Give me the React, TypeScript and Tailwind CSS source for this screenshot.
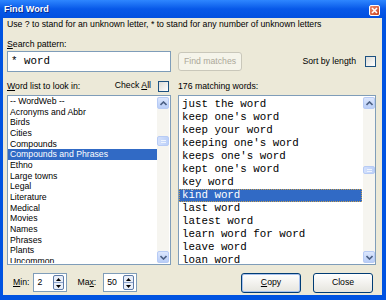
import React from "react"

const listNames = [
  "-- WordWeb --",
  "Acronyms and Abbr",
  "Birds",
  "Cities",
  "Compounds",
  "Compounds and Phrases",
  "Ethno",
  "Large towns",
  "Legal",
  "Literature",
  "Medical",
  "Movies",
  "Names",
  "Phrases",
  "Plants",
  "Uncommon",
]

const matches = [
  "just the word",
  "keep one's word",
  "keep your word",
  "keeping one's word",
  "keeps one's word",
  "kept one's word",
  "key word",
  "kind word",
  "last word",
  "latest word",
  "learn word for word",
  "leave word",
  "loan word",
]

function Chevron({ down }: { down?: boolean }) {
  return (
    <svg width="7" height="5" viewBox="0 0 7 5">
      <polyline
        points={down ? "0.5,1 3.5,4 6.5,1" : "0.5,4 3.5,1 6.5,4"}
        fill="none"
        stroke="#4D6185"
        strokeWidth="1.6"
      />
    </svg>
  )
}

function ArrowBtn({ down }: { down?: boolean }) {
  return (
    <div className="h-[12px] w-full flex items-center justify-center rounded-[2px] border border-[#B7CBF5] bg-gradient-to-b from-[#DCE7FD] to-[#B9CEF7]">
      <Chevron down={down} />
    </div>
  )
}

function Scrollbar({ thumbTop, thumbH }: { thumbTop: string; thumbH: string }) {
  return (
    <div className="w-[12px] flex flex-col bg-[#F6F5F0]">
      <ArrowBtn />
      <div className="flex-1 flex flex-col">
        <div className={`${thumbTop} ${thumbH} rounded-[2px] border border-[#B7CBF5] bg-gradient-to-r from-[#D3E0FC] to-[#BCD0F8] flex flex-col items-center justify-center gap-[1px]`}>
          <div className="w-[5px] h-px bg-[#EEF4FE]" />
          <div className="w-[5px] h-px bg-[#EEF4FE]" />
        </div>
      </div>
      <ArrowBtn down />
    </div>
  )
}

function Checkbox() {
  return <div className="w-[11px] h-[11px] border border-[#1C5180] bg-gradient-to-br from-[#DCDCD7] to-white" />
}

function Spin() {
  return (
    <div className="w-[11px] h-[15px] flex flex-col border border-[#5E7BA8] rounded-[2px] bg-[#E9EEF8]">
      <div className="flex-1 flex items-center justify-center border-b border-[#8CA3CA]">
        <svg width="5" height="3" viewBox="0 0 5 3"><polygon points="0,3 2.5,0 5,3" fill="#000" /></svg>
      </div>
      <div className="flex-1 flex items-center justify-center">
        <svg width="5" height="3" viewBox="0 0 5 3"><polygon points="0,0 2.5,3 5,0" fill="#000" /></svg>
      </div>
    </div>
  )
}

function NumBox({ value }: { value: string }) {
  return (
    <div className="w-[34px] h-[19px] border border-[#7F9DB9] bg-white flex items-center justify-between pl-[3px] pr-[2px] text-[8.7px]">
      <span>{value}</span>
      <Spin />
    </div>
  )
}

export default function App() {
  return (
    <div className="w-[386px] h-[300px] flex flex-col bg-[#0053E1] font-['Liberation_Sans',Arial,sans-serif] text-[8.7px] text-black overflow-hidden">
      {/* title bar */}
      <div className="h-[18px] flex items-start justify-between pl-[4px] pr-[6px] bg-gradient-to-b from-[#2E86FF] via-[#0758E8] to-[#0250E0]">
        <span className="mt-[4px] font-bold text-white text-[9.1px] leading-[10px] [text-shadow:1px_1px_0_#0A2A8A]">Find Word</span>
        <div className="mt-[5px] w-[11px] h-[11px] rounded-[2px] border border-white bg-gradient-to-br from-[#EB8A6A] to-[#C9401C] flex items-center justify-center">
          <svg width="7" height="7" viewBox="0 0 7 7">
            <path d="M1 1 L6 6 M6 1 L1 6" stroke="#fff" strokeWidth="1.6" />
          </svg>
        </div>
      </div>

      {/* body */}
      <div className="flex-1 ml-[3px] mr-[4px] mb-[5px] bg-[#ECE9D8] pl-[4px] flex flex-col">
        <div className="mt-[1px] h-[10px] leading-[10px]">
          Use ? to stand for an unknown letter, * to stand for any number of unknown letters
        </div>
        <div className="mt-[10px] h-[10px] leading-[10px]">
          <span className="underline">S</span>earch pattern:
        </div>

        <div className="mt-[2px] h-[21px] flex">
          <div className="w-[164px] h-[21px] border border-[#7F9DB9] bg-white flex items-center pl-[3px] font-['Liberation_Mono',monospace] text-[10.8px]">
            * word
          </div>
          <div className="ml-[7px] w-[198px] flex items-center">
            <div className="w-[64px] h-[19px] rounded-[3px] border border-[#C9C7BA] bg-[#F5F4EA] text-[#ACA899] flex items-center justify-center">
              Find matches
            </div>
            <span className="ml-auto">Sort by length</span>
            <div className="ml-[9px]">
              <Checkbox />
            </div>
          </div>
        </div>

        <div className="mt-[8px] h-[12px] flex">
          <div className="w-[164px] flex items-center pr-[2px]">
            <span className="mt-[2px]">
              <span className="underline">W</span>ord list to look in:
            </span>
            <span className="ml-auto">
              Check <span className="underline">A</span>ll
            </span>
            <div className="ml-[7px]">
              <Checkbox />
            </div>
          </div>
          <div className="ml-[7px] w-[198px] flex items-center">
            <span className="mt-[2px]">176 matching words:</span>
          </div>
        </div>

        <div className="mt-[3px] h-[170px] flex">
          <div className="w-[164px] h-full border border-[#7F9DB9] bg-white flex pr-[1px] py-[1px]">
            <div className="flex-1 overflow-hidden -mt-[1px]">
              {listNames.map((n, i) => (
                <div
                  key={n}
                  className={`h-[10.67px] leading-[10.67px] pl-[2px] whitespace-nowrap ${
                    i === 5 ? "bg-[#316AC5] text-white" : ""
                  }`}
                >
                  {n}
                </div>
              ))}
            </div>
            <Scrollbar thumbTop="mt-[27px]" thumbH="h-[10px]" />
          </div>

          <div className="ml-[7px] w-[198px] h-full border border-[#7F9DB9] bg-white flex pr-[0px] py-[1px]">
            <div className="flex-1 overflow-hidden pt-[1px] mr-[1px] font-['Liberation_Mono',monospace] text-[10.8px]">
              {matches.map((m, i) => (
                <div
                  key={m}
                  className={`h-[13px] leading-[13px] pl-[3px] whitespace-pre ${
                    i === 7 ? "bg-[#316AC5] text-white outline outline-1 outline-dotted outline-[#C8A050] -outline-offset-1" : ""
                  }`}
                >
                  {m}
                </div>
              ))}
            </div>
            <Scrollbar thumbTop="mt-[57px]" thumbH="h-[8px]" />
          </div>
        </div>

        <div className="mt-[7px] h-[21px] flex items-center">
          <div className="w-[164px] flex items-center pl-[6px]">
            <span>
              <span className="underline">M</span>in:
            </span>
            <div className="ml-[4px]">
              <NumBox value="2" />
            </div>
            <span className="ml-[10px]">
              Ma<span className="underline">x</span>:
            </span>
            <div className="ml-[7px]">
              <NumBox value="50" />
            </div>
          </div>
          <div className="ml-[7px] w-[198px] flex items-center justify-end gap-[12px] pr-[3px]">
            <div className="w-[60px] h-[20px] rounded-[3px] border border-[#003C74] bg-gradient-to-b from-white to-[#E6E5DE] shadow-[inset_0_0_0_1px_#A9C2EE] flex items-center justify-center">
              <span>
                <span className="underline">C</span>opy
              </span>
            </div>
            <div className="w-[60px] h-[20px] rounded-[3px] border border-[#003C74] bg-gradient-to-b from-white to-[#E6E5DE] flex items-center justify-center">
              Close
            </div>
          </div>
        </div>
      </div>
    </div>
  )
}
